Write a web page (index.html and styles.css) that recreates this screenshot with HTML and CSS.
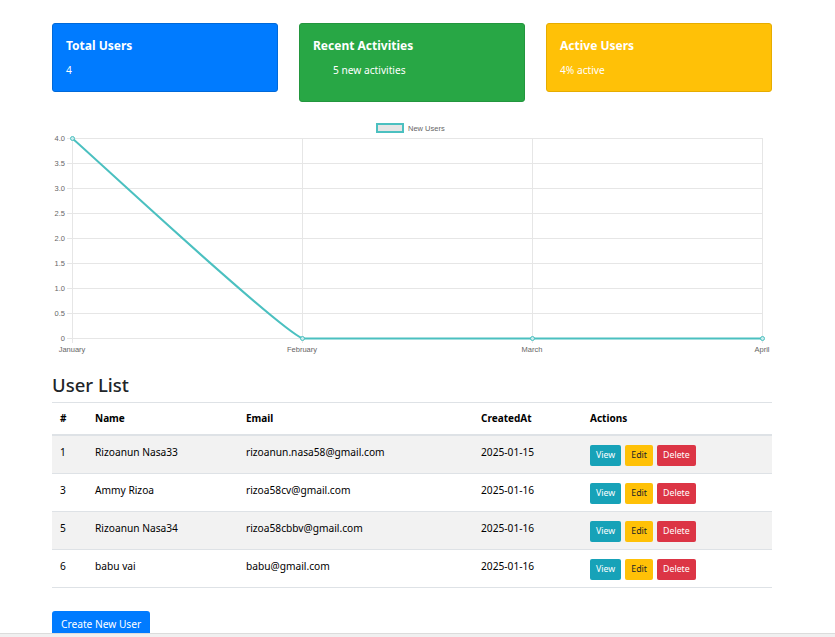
FILE: index.html
```html
<!DOCTYPE html>
<html>
<head>
<meta charset="utf-8">
<link rel="stylesheet" href="styles.css">
</head>
<body>
<div class="container">
  <div class="cards">
    <div class="card card-blue">
      <h5 class="card-title">Total Users</h5>
      <p class="card-text">4</p>
    </div>
    <div class="card card-green">
      <h5 class="card-title">Recent Activities</h5>
      <p class="card-text card-list">5 new activities</p>
    </div>
    <div class="card card-yellow">
      <h5 class="card-title">Active Users</h5>
      <p class="card-text">4% active</p>
    </div>
  </div>

  <svg class="chart" width="720" height="244" viewBox="0 0 720 244" xmlns="http://www.w3.org/2000/svg">
    <g stroke="#e6e6e6" stroke-width="1" shape-rendering="crispEdges">
      <line x1="15" y1="23.5" x2="710" y2="23.5"/>
      <line x1="15" y1="48.5" x2="710" y2="48.5"/>
      <line x1="15" y1="73.5" x2="710" y2="73.5"/>
      <line x1="15" y1="98.5" x2="710" y2="98.5"/>
      <line x1="15" y1="123.5" x2="710" y2="123.5"/>
      <line x1="15" y1="148.5" x2="710" y2="148.5"/>
      <line x1="15" y1="173.5" x2="710" y2="173.5"/>
      <line x1="15" y1="198.5" x2="710" y2="198.5"/>
      <line x1="15" y1="223.5" x2="710" y2="223.5"/>
      <line x1="20.5" y1="23" x2="20.5" y2="228"/>
      <line x1="250.5" y1="23" x2="250.5" y2="228"/>
      <line x1="480.5" y1="23" x2="480.5" y2="228"/>
      <line x1="710.5" y1="23" x2="710.5" y2="228"/>
    </g>
    <g class="ylab" text-anchor="end">
      <text x="13" y="26">4.0</text>
      <text x="13" y="51">3.5</text>
      <text x="13" y="76">3.0</text>
      <text x="13" y="101">2.5</text>
      <text x="13" y="126">2.0</text>
      <text x="13" y="151">1.5</text>
      <text x="13" y="176">1.0</text>
      <text x="13" y="201">0.5</text>
      <text x="13" y="226">0</text>
    </g>
    <g class="xlab" text-anchor="middle">
      <text x="20" y="237">January</text>
      <text x="250" y="237">February</text>
      <text x="480" y="237">March</text>
      <text x="710" y="237">April</text>
    </g>
    <path d="M20.5,23.5 C43.5,43.5 224,212 250.5,223.5 L710.5,223.5" fill="none" stroke="#4bc0c0" stroke-width="2"/>
    <g fill="#c9ecec" stroke="#4bc0c0" stroke-width="1">
      <circle cx="20.5" cy="23.5" r="2"/>
      <circle cx="250.5" cy="223.5" r="2"/>
      <circle cx="480.5" cy="223.5" r="2"/>
      <circle cx="710.5" cy="223.5" r="2"/>
    </g>
    <rect x="325" y="9" width="26" height="8" fill="#e5e5e5" stroke="#4bc0c0" stroke-width="2"/>
    <text class="legend" x="356" y="15.5">New Users</text>
  </svg>

  <h2 class="list-title">User List</h2>
  <table class="users">
    <colgroup>
      <col class="c1"><col class="c2"><col class="c3"><col class="c4"><col class="c5">
    </colgroup>
    <thead>
      <tr><th>#</th><th>Name</th><th>Email</th><th>CreatedAt</th><th>Actions</th></tr>
    </thead>
    <tbody>
      <tr class="odd"><td>1</td><td>Rizoanun Nasa33</td><td>rizoanun.nasa58@gmail.com</td><td>2025-01-15</td>
        <td><div class="actions"><span class="btn btn-view">View</span><span class="btn btn-edit">Edit</span><span class="btn btn-del">Delete</span></div></td></tr>
      <tr><td>3</td><td>Ammy Rizoa</td><td>rizoa58cv@gmail.com</td><td>2025-01-16</td>
        <td><div class="actions"><span class="btn btn-view">View</span><span class="btn btn-edit">Edit</span><span class="btn btn-del">Delete</span></div></td></tr>
      <tr class="odd"><td>5</td><td>Rizoanun Nasa34</td><td>rizoa58cbbv@gmail.com</td><td>2025-01-16</td>
        <td><div class="actions"><span class="btn btn-view">View</span><span class="btn btn-edit">Edit</span><span class="btn btn-del">Delete</span></div></td></tr>
      <tr><td>6</td><td>babu vai</td><td>babu@gmail.com</td><td>2025-01-16</td>
        <td><div class="actions"><span class="btn btn-view">View</span><span class="btn btn-edit">Edit</span><span class="btn btn-del">Delete</span></div></td></tr>
    </tbody>
  </table>
  <div class="create-wrap"><span class="btn-create">Create New User</span></div>
</div>
<div class="hscroll"></div>
</body>
</html>
```
FILE: styles.css
```css
html, body {
  margin: 0;
  padding: 0;
  background: #fff;
}
body {
  font-family: "Noto Sans", "Open Sans", sans-serif;
  color: #212529;
  font-size: 11px;
  overflow: hidden;
  height: 637px;
}
.container {
  width: 720px;
  margin-left: 52px;
  padding-top: 23px;
}
.cards {
  display: flex;
  align-items: flex-start;
  gap: 21px;
}
.card {
  width: 226px;
  box-sizing: border-box;
  padding: 13px 13px 13px;
  border-radius: 3px;
  border: 1px solid transparent;
  color: #fff;
}
.card-blue { background: #007bff; border-color: #0069d9; }
.card-green { background: #28a745; border-color: #23963e; }
.card-yellow { background: #ffc107; border-color: #e6ac00; }
.card-title {
  margin: 0 0 8px;
  font-size: 12px;
  font-weight: 700;
  line-height: 17px;
}
.card-text {
  margin: 0;
  font-size: 10.2px;
  line-height: 16px;
}
.card-list {
  padding-left: 20px;
  margin-bottom: 10px;
}
.chart {
  display: block;
  margin-top: 13px;
  font-family: "Liberation Sans", Arial, sans-serif;
}
.ylab text, .xlab text {
  font-size: 7.5px;
  fill: #666;
}
.legend {
  font-size: 7.5px;
  fill: #666;
}
.list-title {
  font-size: 18.5px;
  font-weight: 500;
  line-height: 24px;
  margin: 14px 0 5px;
  color: #212529;
}
.users {
  width: 720px;
  border-collapse: collapse;
  table-layout: fixed;
}
.c1 { width: 35px; }
.c2 { width: 151px; }
.c3 { width: 235px; }
.c4 { width: 109px; }
.c5 { width: 190px; }
.users th {
  text-align: left;
  font-weight: 700;
  font-size: 10px;
  color: #000;
  padding: 7px 8px 8px;
  height: 16px;
  border-top: 1px solid #dee2e6;
  border-bottom: 2px solid #dee2e6;
  line-height: 16px;
}
.users td {
  font-size: 10.2px;
  color: #000;
  padding: 8px 8px 7px;
  vertical-align: top;
  line-height: 16px;
  border-bottom: 1px solid #dee2e6;
}
.users tr.odd td { background: #f2f2f2; }
.actions {
  display: flex;
  gap: 4px;
  padding-top: 1px;
}
.btn {
  display: inline-block;
  font-size: 8.8px;
  line-height: 21px;
  height: 21px;
  padding: 0 6px;
  border-radius: 2px;
  color: #fff;
}
.btn-view { background: #17a2b8; }
.btn-edit { background: #ffc107; color: #212529; }
.btn-del { background: #dc3545; }
.create-wrap {
  margin-top: 23px;
}
.btn-create {
  display: inline-block;
  background: #007bff;
  color: #fff;
  font-size: 10.2px;
  line-height: 16px;
  padding: 5px 9px 5px;
  border-radius: 3px;
}
.hscroll {
  position: fixed;
  left: 0;
  right: 0;
  bottom: 0;
  height: 3px;
  border-top: 1px solid #dcdcdc;
  background: #f0f0f0;
}
```
